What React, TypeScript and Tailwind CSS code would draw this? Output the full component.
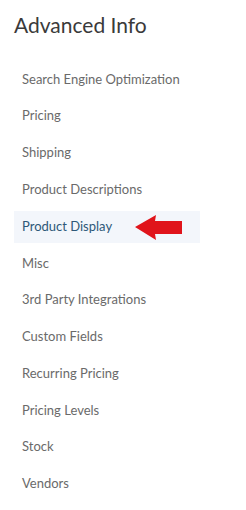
const items = [
  "Search Engine Optimization",
  "Pricing",
  "Shipping",
  "Product Descriptions",
  "Product Display",
  "Misc",
  "3rd Party Integrations",
  "Custom Fields",
  "Recurring Pricing",
  "Pricing Levels",
  "Stock",
  "Vendors",
];

function Arrow() {
  return (
    <svg width="48" height="26" viewBox="0 0 48 26" className="absolute left-[120px] top-[3px]">
      <path d="M1 13 L22 1 L21 7 L48 7 L48 20 L21 20 L22 26 Z" fill="#e0141b" />
    </svg>
  );
}

export default function App() {
  return (
    <div className="w-[246px] h-[510px] bg-white font-['Lato',sans-serif]">
      <h1 className="pl-[14px] pt-[12px] text-[21px] leading-[26px] text-[#3a3a3a]">Advanced Info</h1>
      <ul className="mt-[23px]">
        {items.map((label) => {
          const active = label === "Product Display";
          return (
            <li key={label} className="py-[2.4px]">
              <div
                className={
                  active
                    ? "relative ml-[14px] w-[186px] h-[32px] flex items-center px-2 text-[13px] bg-[#f3f6fb] text-[#2e5878]"
                    : "relative ml-[14px] w-[186px] h-[32px] flex items-center px-2 text-[13px] text-[#6a6a6a]"
                }
              >
                {label}
                {active && <Arrow />}
              </div>
            </li>
          );
        })}
      </ul>
    </div>
  );
}
